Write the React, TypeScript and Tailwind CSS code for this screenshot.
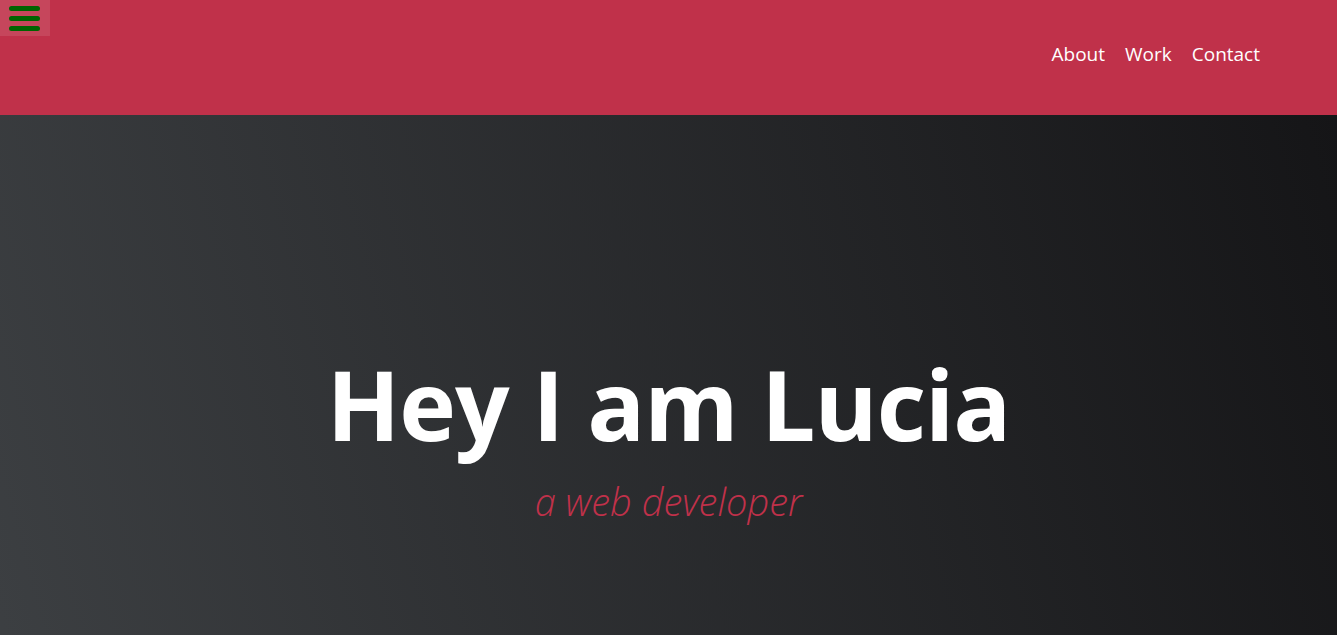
import React from "react";

const links = ["About", "Work", "Contact"];

const App: React.FC = () => {
  return (
    <div className="font-['Open_Sans',sans-serif]">
      {/* Header */}
      <header className="relative h-[115px] bg-[#c0314a] flex items-center justify-end pr-[77px]">
        <button className="absolute left-0 top-0 w-[50px] h-[36px] bg-white/10 flex flex-col items-center justify-center gap-[5px] pr-[2px]">
          <span className="block w-[31px] h-[5px] rounded-full bg-[#006400]" />
          <span className="block w-[31px] h-[5px] rounded-full bg-[#006400]" />
          <span className="block w-[31px] h-[5px] rounded-full bg-[#006400]" />
        </button>
        <nav className="flex items-center gap-[20px] -mt-[6px]">
          {links.map((link) => (
            <a key={link} href="#" className="text-white text-[19px]">
              {link}
            </a>
          ))}
        </nav>
      </header>

      {/* Hero */}
      <section className="h-screen pt-[20px] bg-linear-[75deg] from-[#3d4043] to-[#151517] flex flex-col items-center justify-center">
        <h1 className="text-white font-bold text-[96px] leading-none tracking-[-1px]">
          Hey I am Lucia
        </h1>
        <h2 className="text-[#c0314a] italic font-light text-[38px] mt-[21px]">
          a web developer
        </h2>
      </section>
    </div>
  );
};

export default App;
